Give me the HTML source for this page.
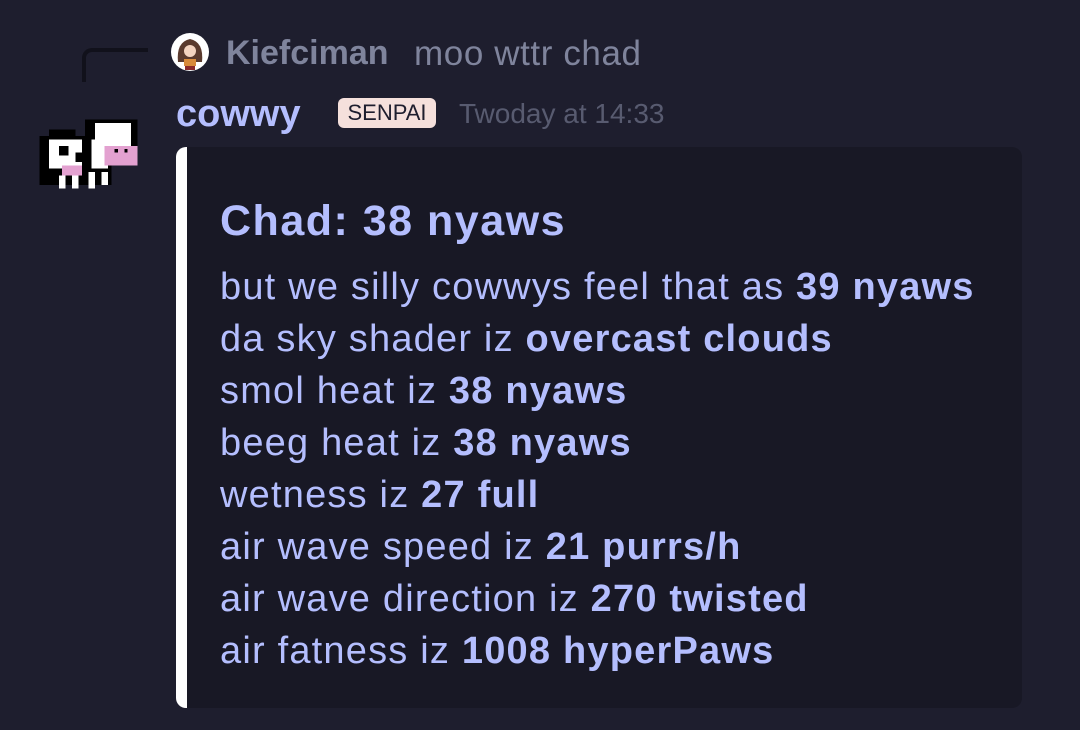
<!DOCTYPE html>
<html><head><style>
html,body{margin:0;padding:0;background:#1e1e2e;width:1080px;height:730px;overflow:hidden;font-family:"Liberation Sans","DejaVu Sans",sans-serif}
.abs{position:absolute}
.reply{left:82px;top:48px;width:66px;height:34px;border-left:4px solid #11111b;border-top:4px solid #11111b;border-top-left-radius:10px;box-sizing:border-box}
.rname{left:226px;top:34px;font-size:34px;font-weight:bold;color:#7f849c}
.rmsg{left:414px;top:34px;font-size:35px;letter-spacing:0.6px;color:#7f849c}
.name{left:176px;top:93px;font-size:38px;font-weight:bold;color:#b4befe}
.badge{left:338px;top:98px;width:98px;height:30px;background:#f5e0dc;border-radius:6px;color:#1e1e2e;font-size:22px;text-align:center;line-height:30px}
.ts{left:459px;top:98px;font-size:28px;color:#585b70}
.embed{left:176px;top:147px;width:846px;height:561px;background:#181825;border-radius:10px;border-left:11px solid #fff;box-sizing:border-box}
.title{left:220px;top:197px;font-size:43px;letter-spacing:1.5px;font-weight:bold;color:#b4befe}
.lines{left:220px;top:261px;font-size:38px;letter-spacing:1.2px;line-height:52px;color:#b4befe;white-space:nowrap}
.lines b{color:#b4befe}
</style></head><body>
<div class="abs reply"></div>
<svg class="abs" style="left:170px;top:32px" width="40" height="40" viewBox="0 0 40 40"><circle cx="20" cy="20" r="19" fill="#fff"/><path d="M8 30 Q6 10 20 7 Q34 10 32 30 Z" fill="#5a3a2e"/><circle cx="20" cy="19" r="6" fill="#f3d3c0"/><rect x="14" y="27" width="12" height="7" fill="#d88a3a"/><rect x="15" y="34" width="10" height="4" fill="#8b2a2a"/></svg>
<div class="abs rname">Kiefciman</div>
<div class="abs rmsg">moo wttr chad</div>
<svg class="abs" style="left:36px;top:113px" width="108" height="82" viewBox="0 0 33 25" shape-rendering="crispEdges">
<rect x="1" y="7" width="22" height="15" fill="#000"/><rect x="4" y="5" width="8" height="3" fill="#000"/>
<rect x="15" y="2" width="16" height="14" fill="#000"/>
<rect x="4" y="8" width="10" height="9" fill="#fff"/><rect x="7" y="10" width="3" height="3" fill="#000"/><rect x="12" y="12" width="2" height="3" fill="#000"/>
<rect x="18" y="3" width="11" height="8" fill="#fff"/><rect x="17" y="8" width="5" height="9" fill="#fff"/>
<rect x="21" y="10" width="10" height="6" fill="#e3a1d0"/><rect x="24" y="11" width="1" height="1" fill="#000"/><rect x="27" y="11" width="1" height="1" fill="#000"/>
<rect x="8" y="16" width="6" height="3" fill="#e3a1d0"/>
<rect x="7" y="19" width="2" height="4" fill="#fff"/><rect x="11" y="19" width="2" height="4" fill="#fff"/><rect x="16" y="18" width="2" height="5" fill="#fff"/><rect x="20" y="18" width="2" height="4" fill="#fff"/>
</svg>
<div class="abs name">cowwy</div>
<div class="abs badge">SENPAI</div>
<div class="abs ts">Twoday at 14:33</div>
<div class="abs embed"></div>
<div class="abs title">Chad: 38 nyaws</div>
<div class="abs lines">
but we silly cowwys feel that as <b>39 nyaws</b><br>
da sky shader iz <b>overcast clouds</b><br>
smol heat iz <b>38 nyaws</b><br>
beeg heat iz <b>38 nyaws</b><br>
wetness iz <b>27 full</b><br>
air wave speed iz <b>21 purrs/h</b><br>
air wave direction iz <b>270 twisted</b><br>
air fatness iz <b>1008 hyperPaws</b>
</div>
</body></html>
